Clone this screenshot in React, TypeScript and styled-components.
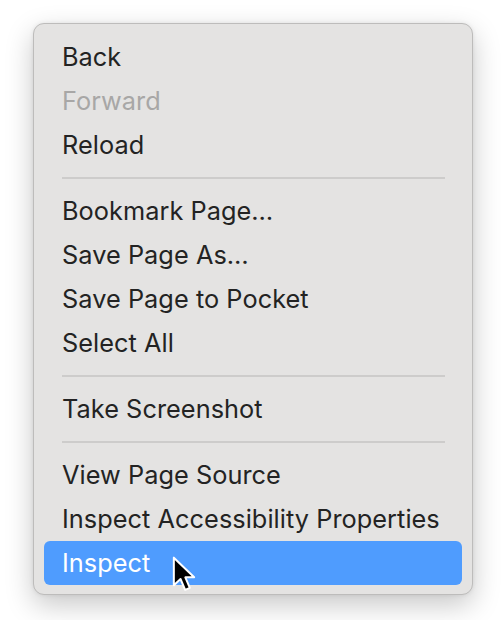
import React from "react";
import styled, { createGlobalStyle } from "styled-components";

const Global = createGlobalStyle`
  html, body { margin: 0; padding: 0; background: #ffffff; }
  body { font-family: Inter, "Noto Sans", "Liberation Sans", sans-serif; }
`;

const Page = styled.div`
  width: 501px;
  height: 620px;
  padding: 23px 0 0 33px;
  box-sizing: border-box;
`;

const Menu = styled.div`
  width: 440px;
  box-sizing: border-box;
  background: #e4e3e2;
  border: 1px solid #bdbcbb;
  border-radius: 11px;
  padding: 11px 10px 9px;
  box-shadow: 0 10px 28px rgba(0, 0, 0, 0.22), 0 0 4px rgba(0, 0, 0, 0.08);
  display: flex;
  flex-direction: column;
`;

const Item = styled.div<{ $disabled?: boolean; $active?: boolean }>`
  position: relative;
  height: 44px;
  box-sizing: border-box;
  display: flex;
  align-items: center;
  padding: 0 0 2px 18px;
  border-radius: 6px;
  font-size: 25.3px;
  letter-spacing: 0.05px;
  color: ${(p) => (p.$active ? "#ffffff" : p.$disabled ? "#a8a7a6" : "#232323")};
  background: ${(p) => (p.$active ? "#4f9cfe" : "transparent")};
`;

const Separator = styled.div`
  height: 2px;
  margin: 10px 17px 10px 18px;
  background: #cdcccb;
`;

const Cursor = styled.svg`
  position: absolute;
  left: 128px;
  top: 15px;
  width: 27px;
  height: 40px;
  overflow: visible;
`;

type Entry = { label: string; disabled?: boolean; active?: boolean } | "sep";

const entries: Entry[] = [
  { label: "Back" },
  { label: "Forward", disabled: true },
  { label: "Reload" },
  "sep",
  { label: "Bookmark Page…" },
  { label: "Save Page As…" },
  { label: "Save Page to Pocket" },
  { label: "Select All" },
  "sep",
  { label: "Take Screenshot" },
  "sep",
  { label: "View Page Source" },
  { label: "Inspect Accessibility Properties" },
  { label: "Inspect", active: true },
];

export default function App() {
  return (
    <Page>
      <Global />
      <Menu>
        {entries.map((e, i) =>
          e === "sep" ? (
            <Separator key={i} />
          ) : (
            <Item key={i} $disabled={e.disabled} $active={e.active}>
              {e.label}
              {e.active && (
                <Cursor viewBox="0 0 16 24">
                  <path
                    d="M1 1 L1 17.5 L5 13.8 L7.8 20.3 L10.6 19.1 L7.9 12.8 L13.2 12.8 Z"
                    fill="#000"
                    stroke="#fff"
                    strokeWidth="1.2"
                    strokeLinejoin="round"
                  />
                </Cursor>
              )}
            </Item>
          )
        )}
      </Menu>
    </Page>
  );
}
